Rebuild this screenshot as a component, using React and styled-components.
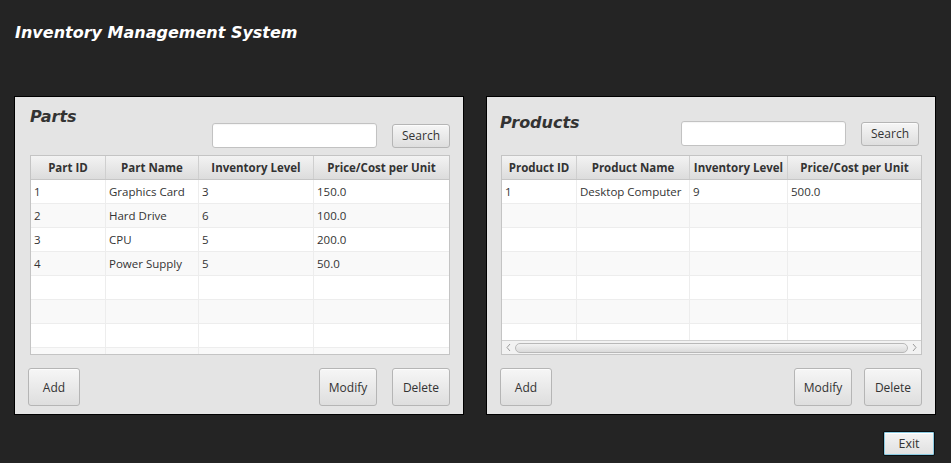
import React from "react";
import styled, { createGlobalStyle } from "styled-components";

const Global = createGlobalStyle`
  html, body { margin: 0; padding: 0; background: #242424; }
  body { font-family: "Open Sans", "Noto Sans", sans-serif; }
  * { box-sizing: border-box; }
`;

const UI_FONT = `"Open Sans", "Noto Sans", sans-serif`;
const TITLE_FONT = `"DejaVu Sans", Verdana, sans-serif`;

const Page = styled.div`
  width: 951px;
  height: 463px;
  padding: 23px 16px 0 14px;
  display: flex;
  flex-direction: column;
`;

const AppTitle = styled.h1`
  margin: 0 0 53px 1px;
  font-family: ${TITLE_FONT};
  font-size: 16px;
  line-height: 20px;
  font-weight: bold;
  font-style: italic;
  color: #ffffff;
`;

const Panels = styled.div`
  display: flex;
  gap: 22px;
`;

const Panel = styled.section`
  width: 450px;
  height: 319px;
  background: #e4e4e4;
  border: 1px solid #000;
  padding: 0 ${(p) => p.$padRight}px 0 ${(p) => p.$padLeft}px;
  display: flex;
  flex-direction: column;
`;

const PanelHeader = styled.div`
  height: 58px;
  display: flex;
  justify-content: space-between;
  align-items: flex-start;
`;

const PanelTitle = styled.h2`
  margin: ${(p) => p.$top}px 0 0 ${(p) => p.$left}px;
  font-family: ${TITLE_FONT};
  font-size: 16px;
  line-height: 20px;
  font-weight: bold;
  font-style: italic;
  color: #333333;
`;

const SearchGroup = styled.div`
  align-self: flex-end;
  margin-bottom: ${(p) => p.$bottom}px;
  margin-right: ${(p) => p.$right}px;
  display: flex;
  align-items: center;
  gap: 15px;
`;

const SearchField = styled.input`
  width: 165px;
  height: 25px;
  border: 1px solid #c2c2c2;
  border-radius: 3px;
  background: #ffffff;
  box-shadow: inset 0 1px 1px rgba(0, 0, 0, 0.04);
  outline: none;
`;

const Button = styled.button`
  width: ${(p) => p.$w}px;
  height: ${(p) => p.$h}px;
  padding: 0;
  border: 1px solid #b5b5b5;
  border-radius: 3px;
  background: linear-gradient(#f6f6f6, #dedede);
  box-shadow: inset 0 1px 0 rgba(255, 255, 255, 0.7);
  font-family: ${UI_FONT};
  font-size: 12px;
  color: #333333;
  cursor: default;
`;

const ExitButton = styled(Button)`
  border: 1px solid #0a0f12;
  border-radius: 2px;
  box-shadow: inset 0 0 0 1px #8ccbe2, inset 0 2px 0 #ffffff;
  background: linear-gradient(#f4f4f4, #e0e0e0);
  font-size: 12.5px;
`;

const Table = styled.div`
  width: ${(p) => p.$w}px;
  height: 200px;
  border: 1px solid #c4c4c4;
  background: #ffffff;
  display: flex;
  flex-direction: column;
  overflow: hidden;
  font-family: ${UI_FONT};
  font-size: 11.5px;
  color: #333333;
`;

const HeaderRow = styled.div`
  display: grid;
  grid-template-columns: ${(p) => p.$cols};
  height: 24px;
  flex: none;
  border-bottom: 1px solid #c6c6c6;
  background: linear-gradient(#f3f3f3, #dcdcdc);
`;

const HeaderCell = styled.div`
  display: flex;
  align-items: center;
  justify-content: center;
  font-weight: bold;
  white-space: nowrap;
  overflow: hidden;
  border-right: 1px solid #cfcfcf;
  &:last-child { border-right: none; }
`;

const Body = styled.div`
  flex: 1;
  overflow: hidden;
`;

const Row = styled.div`
  display: grid;
  grid-template-columns: ${(p) => p.$cols};
  height: 24px;
  background: ${(p) => (p.$odd ? "#f9f9f9" : "#ffffff")};
  border-bottom: 1px solid #ededed;
`;

const Cell = styled.div`
  display: flex;
  align-items: center;
  padding-left: 3px;
  white-space: nowrap;
  overflow: hidden;
  border-right: 1px solid #ededed;
  &:last-child { border-right: none; }
`;

const ScrollBar = styled.div`
  height: 14px;
  flex: none;
  border-top: 1px solid #d0d0d0;
  background: #f2f2f2;
  display: flex;
  align-items: center;
  padding: 0 3px;
  gap: 3px;
`;

const Arrow = styled.svg`
  width: 7px;
  height: 9px;
  flex: none;
`;

const Thumb = styled.div`
  flex: 1;
  height: 10px;
  border: 1px solid #b8b8b8;
  border-radius: 5px;
  background: linear-gradient(#f2f2f2, #dadada);
`;

const ButtonRow = styled.div`
  margin-top: 13px;
  margin-left: ${(p) => p.$left}px;
  margin-right: ${(p) => p.$right}px;
  display: flex;
  gap: ${(p) => p.$gap}px;
`;

const Spacer = styled.div`
  flex: 1;
`;

const Footer = styled.div`
  margin-top: 16px;
  display: flex;
  justify-content: flex-end;
`;

function DataTable({ width, cols, headers, rows, count, scroll }) {
  const filled = Array.from({ length: count }, (_, i) => rows[i] || ["", "", "", ""]);
  return (
    <Table $w={width}>
      <HeaderRow $cols={cols}>
        {headers.map((h) => (
          <HeaderCell key={h}>{h}</HeaderCell>
        ))}
      </HeaderRow>
      <Body>
        {filled.map((r, i) => (
          <Row key={i} $cols={cols} $odd={i % 2 === 1}>
            {r.map((c, j) => (
              <Cell key={j}>{c}</Cell>
            ))}
          </Row>
        ))}
      </Body>
      {scroll && (
        <ScrollBar>
          <Arrow viewBox="0 0 7 9">
            <path d="M5 1 L2 4.5 L5 8" fill="none" stroke="#9a9a9a" strokeWidth="1" />
          </Arrow>
          <Thumb />
          <Arrow viewBox="0 0 7 9">
            <path d="M2 1 L5 4.5 L2 8" fill="none" stroke="#9a9a9a" strokeWidth="1" />
          </Arrow>
        </ScrollBar>
      )}
    </Table>
  );
}

const parts = [
  ["1", "Graphics Card", "3", "150.0"],
  ["2", "Hard Drive", "6", "100.0"],
  ["3", "CPU", "5", "200.0"],
  ["4", "Power Supply", "5", "50.0"],
];

const products = [["1", "Desktop Computer", "9", "500.0"]];

export default function App() {
  return (
    <>
      <Global />
      <Page>
        <AppTitle>Inventory Management System</AppTitle>
        <Panels>
          <Panel $padLeft={15} $padRight={13}>
            <PanelHeader>
              <PanelTitle $top={10} $left={0}>Parts</PanelTitle>
              <SearchGroup $bottom={7} $right={0}>
                <SearchField />
                <Button $w={58} $h={24}>Search</Button>
              </SearchGroup>
            </PanelHeader>
            <DataTable
              width={420}
              cols="75px 93px 115px 1fr"
              headers={["Part ID", "Part Name", "Inventory Level", "Price/Cost per Unit"]}
              rows={parts}
              count={8}
            />
            <ButtonRow $left={-2} $right={0} $gap={15}>
              <Button $w={52} $h={38}>Add</Button>
              <Spacer />
              <Button $w={58} $h={38}>Modify</Button>
              <Button $w={58} $h={38}>Delete</Button>
            </ButtonRow>
          </Panel>
          <Panel $padLeft={14} $padRight={13}>
            <PanelHeader>
              <PanelTitle $top={16} $left={-1}>Products</PanelTitle>
              <SearchGroup $bottom={9} $right={3}>
                <SearchField />
                <Button $w={58} $h={24}>Search</Button>
              </SearchGroup>
            </PanelHeader>
            <DataTable
              width={421}
              cols="75px 113px 98px 1fr"
              headers={["Product ID", "Product Name", "Inventory Level", "Price/Cost per Unit"]}
              rows={products}
              count={7}
              scroll
            />
            <ButtonRow $left={-1} $right={0} $gap={12}>
              <Button $w={52} $h={38}>Add</Button>
              <Spacer />
              <Button $w={58} $h={38}>Modify</Button>
              <Button $w={58} $h={38}>Delete</Button>
            </ButtonRow>
          </Panel>
        </Panels>
        <Footer>
          <ExitButton $w={52} $h={25}>Exit</ExitButton>
        </Footer>
      </Page>
    </>
  );
}
